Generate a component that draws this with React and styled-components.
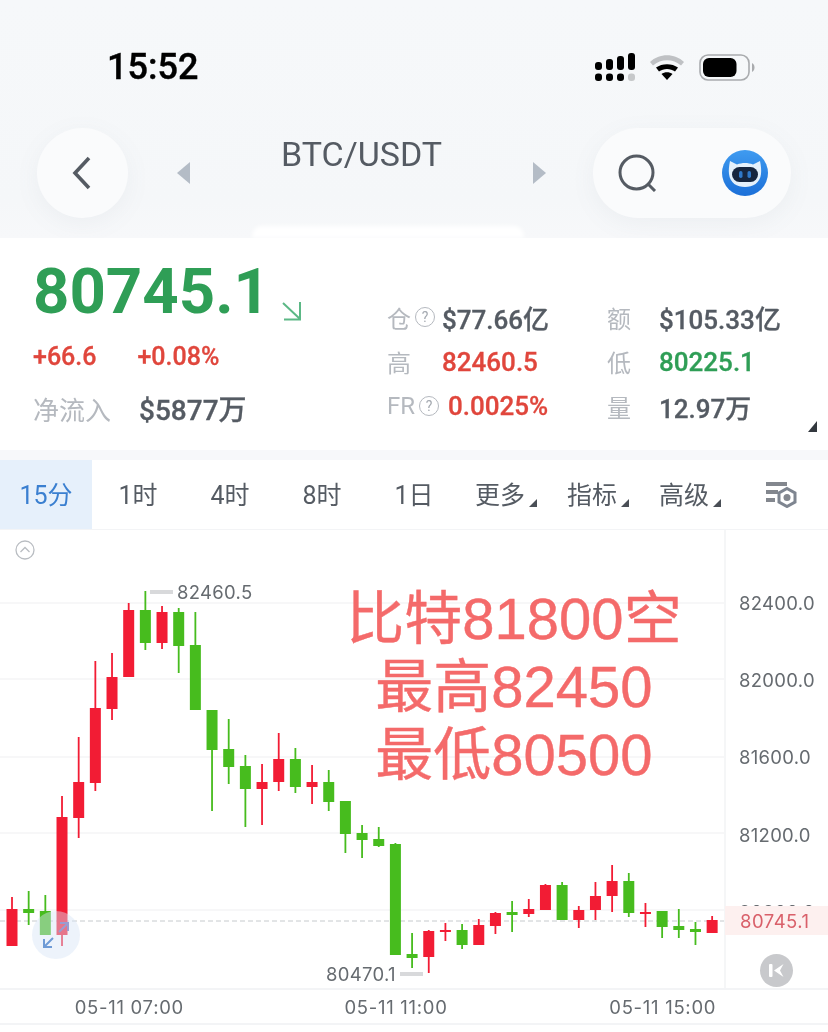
import React from 'react';
import styled, { createGlobalStyle } from 'styled-components';

const GlobalStyle = createGlobalStyle`
  html, body {
    margin: 0;
    padding: 0;
    background: #fff;
  }
  body {
    font-family: Roboto, "Noto Sans CJK SC", sans-serif;
  }
`;

const RED = '#f21c34';
const GREEN = '#47bc1e';

// x of the first candle is 12, then one every 16.67px
// [top wick, body top, body bottom, bottom wick, up?]
const CANDLES = [
  [897, 909, 946, 946, 1],
  [891, 909, 913, 925, 0],
  [895, 911, 935, 935, 0],
  [796, 817, 935, 946, 1],
  [737, 782, 818, 838, 1],
  [661, 708, 783, 791, 1],
  [653, 677, 709, 720, 1],
  [603, 610, 677, 677, 1],
  [591, 610, 643, 650, 0],
  [606, 612, 643, 649, 1],
  [608, 612, 646, 673, 0],
  [612, 645, 710, 710, 0],
  [710, 710, 750, 811, 0],
  [719, 749, 767, 784, 0],
  [755, 766, 789, 827, 0],
  [764, 782, 789, 825, 1],
  [733, 759, 782, 791, 1],
  [748, 759, 787, 793, 0],
  [765, 782, 787, 804, 1],
  [770, 782, 802, 811, 0],
  [801, 801, 834, 853, 0],
  [825, 833, 840, 858, 0],
  [827, 839, 846, 847, 0],
  [843, 844, 955, 955, 0],
  [933, 954, 958, 968, 0],
  [930, 931, 957, 973, 1],
  [923, 930, 932, 941, 1],
  [924, 930, 945, 949, 0],
  [919, 925, 945, 945, 1],
  [912, 913, 926, 934, 1],
  [901, 912, 915, 932, 0],
  [899, 909, 914, 917, 1],
  [884, 885, 910, 910, 1],
  [882, 885, 920, 920, 0],
  [906, 910, 920, 928, 1],
  [882, 896, 910, 920, 1],
  [865, 881, 896, 912, 1],
  [873, 881, 913, 917, 0],
  [903, 912, 914, 927, 1],
  [911, 911, 927, 938, 0],
  [909, 926, 930, 938, 0],
  [922, 929, 932, 945, 0],
  [916, 920, 933, 933, 1],
];

const GRID_LINES = [603, 679, 757, 833, 910];
const CHART_TOP = 530;

const Page = styled.div`
  width: 828px;
  height: 1032px;
  overflow: hidden;
  display: flex;
  flex-direction: column;
  background: #fff;
  filter: blur(0.5px);
`;

const Header = styled.header`
  height: 238px;
  box-sizing: border-box;
  padding-top: 46px;
  position: relative;
  background: linear-gradient(#f6f8fa, #f5f7f9 85%, #f7f8fa);

  &::after {
    content: '';
    position: absolute;
    left: 252px;
    bottom: 0;
    width: 272px;
    height: 12px;
    border-radius: 10px 10px 0 0;
    background: #fff;
    filter: blur(2px);
  }
`;

const StatusBar = styled.div`
  height: 42px;
  padding: 0 73px 0 107px;
  display: flex;
  align-items: center;
  justify-content: space-between;
`;

const Clock = styled.span`
  font-size: 36px;
  font-weight: 500;
  line-height: 42px;
  color: #000;
  -webkit-text-stroke: 0.4px #000;
`;

const StatusIcons = styled.div`
  display: flex;
  align-items: center;
  gap: 14px;
`;

const NavBar = styled.nav`
  margin-top: 40px;
  padding: 0 37px;
  display: flex;
  align-items: center;
  justify-content: space-between;
`;

const RoundButton = styled.button`
  width: 91px;
  height: 90px;
  padding: 0 3px 0 0;
  border: 0;
  border-radius: 50%;
  background: #fafbfc;
  box-shadow: 0 6px 24px rgba(120, 130, 145, 0.07);
  display: flex;
  align-items: center;
  justify-content: center;
`;

const PairSwitch = styled.div`
  width: 371px;
  height: 90px;
  box-sizing: border-box;
  padding-left: 2px;
  display: flex;
  justify-content: space-between;
  align-items: center;
`;

const PairName = styled.span`
  margin-top: -38px;
  font-size: 34px;
  line-height: 36px;
  color: #555b63;
`;

const ActionPill = styled.div`
  width: 198px;
  height: 90px;
  box-sizing: border-box;
  padding: 0 23px 0 25px;
  border-radius: 45px;
  background: #fafbfc;
  box-shadow: 0 6px 24px rgba(120, 130, 145, 0.07);
  display: flex;
  align-items: center;
  justify-content: space-between;
`;

const QuotePanel = styled.section`
  height: 212px;
  position: relative;
  display: flex;
  background: #fff;
`;

const MainQuote = styled.div`
  width: 387px;
  box-sizing: border-box;
  padding: 17px 0 0 33px;
`;

const PriceRow = styled.div`
  display: flex;
  align-items: flex-end;
  gap: 12px;
`;

const BigPrice = styled.span`
  font-size: 63.5px;
  font-weight: 700;
  line-height: 74px;
  color: #2f9e56;
`;

const PriceTrend = styled.svg`
  margin-bottom: 8px;
`;

const ChangeRow = styled.div`
  margin-top: 13px;
  display: flex;
  gap: 41px;
  font-size: 25px;
  font-weight: 500;
  line-height: 30px;
  color: #e0463c;
  -webkit-text-stroke: 0.3px #e0463c;
`;

const NetRow = styled.div`
  margin-top: 21px;
  display: flex;
  align-items: center;
  gap: 28px;
  line-height: 36px;
`;

const NetLabel = styled.span`
  font-size: 26px;
  color: #b5b9bf;
`;

const NetValue = styled.span`
  font-size: 28px;
  font-weight: 500;
  color: #555b63;
  -webkit-text-stroke: 0.3px #555b63;
`;

const StatsGrid = styled.div`
  padding-top: 57px;
  display: grid;
  grid-template-columns: 220px 1fr;
  grid-auto-rows: 44.5px;
`;

const Stat = styled.div`
  display: flex;
  align-items: center;
`;

const StatLabel = styled.span`
  width: ${(p) => p.$width}px;
  flex: none;
  display: flex;
  align-items: center;
  gap: 4px;
  font-size: 24px;
  color: #b5b9bf;
`;

const StatValue = styled.span`
  font-size: 26px;
  font-weight: 500;
  color: ${(p) => p.$color || '#555b63'};
  -webkit-text-stroke: 0.3px ${(p) => p.$color || '#555b63'};
`;

const HelpMark = styled.span`
  width: 18px;
  height: 18px;
  border: 1.5px solid #b5b9bf;
  border-radius: 50%;
  display: flex;
  align-items: center;
  justify-content: center;
  font-size: 14px;
  line-height: 1;
  color: #a4a9b0;
`;

const CornerMark = styled.span`
  position: absolute;
  right: 11px;
  bottom: 18px;
  width: 0;
  height: 0;
  border-style: solid;
  border-width: 0 0 11px 9px;
  border-color: transparent transparent #33383e transparent;
`;

const Divider = styled.div`
  height: 10px;
  background: #f7f8fa;
`;

const Tabs = styled.div`
  height: 70px;
  display: grid;
  grid-template-columns: repeat(9, 92px);
  border-bottom: 1px solid #f3f4f6;
  box-sizing: border-box;
`;

const Tab = styled.div`
  padding-bottom: 3px;
  display: flex;
  align-items: center;
  justify-content: center;
  gap: 4px;
  font-size: 25px;
  color: ${(p) => (p.$active ? '#3a7fd0' : '#555b63')};
  background: ${(p) => (p.$active ? '#e6f0fb' : 'transparent')};
`;

const TabCaret = styled.span`
  margin-top: 20px;
  width: 0;
  height: 0;
  border-style: solid;
  border-width: 0 0 8px 8px;
  border-color: transparent transparent #4a4f56 transparent;
`;

const SettingsGlyph = styled.svg`
  margin-top: 4px;
`;

const ChartArea = styled.section`
  flex: 1;
  display: flex;
  flex-direction: column;
`;

const ChartBody = styled.div`
  height: 460px;
  position: relative;
  display: flex;
  border-bottom: 2px solid #f3f4f6;
  box-sizing: border-box;
`;

const Plot = styled.div`
  width: 724px;
  flex: none;
  position: relative;
  overflow: hidden;
`;

const PriceAxis = styled.div`
  flex: 1;
  border-left: 2px solid #f5f6f7;
  box-sizing: border-box;
  padding-top: 60px;
  overflow: hidden;
`;

const AxisLabel = styled.div`
  height: 77.2px;
  line-height: 26px;
  padding-left: 13px;
  font-family: Inter, sans-serif;
  font-size: 18.5px;
  letter-spacing: 0.3px;
  color: #666b70;
`;

const LastPrice = styled.div`
  position: absolute;
  right: 0;
  top: 376px;
  width: 103px;
  height: 29px;
  background: #fdf0ef;
  padding-left: 15px;
  box-sizing: border-box;
  font-family: Inter, sans-serif;
  font-size: 18.5px;
  letter-spacing: 0.5px;
  line-height: 30px;
  color: #d9606a;
`;

const Extreme = styled.div`
  position: absolute;
  left: ${(p) => p.$left}px;
  top: ${(p) => p.$top}px;
  display: flex;
  align-items: center;
  gap: 4px;
  font-family: Inter, sans-serif;
  font-size: 18.5px;
  letter-spacing: 0.3px;
  line-height: 20px;
  color: #666b70;
`;

const ExtremeTick = styled.span`
  width: 23px;
  height: 4px;
  background: #d8d9db;
`;

const Annotation = styled.div`
  position: absolute;
  left: 300px;
  top: 55px;
  width: 428px;
  text-align: center;
  font-family: "Liberation Sans", "Noto Sans CJK SC", sans-serif;
  font-size: 58px;
  line-height: 68px;
  color: #f46a6a;
  -webkit-text-stroke: 0.4px #f46a6a;
`;

const CollapseIcon = styled.svg`
  position: absolute;
  left: 15px;
  top: 10px;
`;

const ExpandButton = styled.div`
  position: absolute;
  left: 32px;
  top: 381px;
  width: 48px;
  height: 48px;
  border-radius: 50%;
  background: rgba(214, 228, 246, 0.45);
  display: flex;
  align-items: center;
  justify-content: center;
`;

const RewindButton = styled.div`
  position: absolute;
  right: 35px;
  bottom: 1px;
  width: 33px;
  height: 33px;
  border-radius: 50%;
  background: #c8c9cc;
  display: flex;
  align-items: center;
  justify-content: center;
`;

const TimeAxis = styled.div`
  height: 33px;
  display: flex;
  margin-left: -4px;
  border-bottom: 2px solid #f3f4f6;
`;

const TimeLabel = styled.span`
  width: 266.7px;
  text-align: center;
  font-family: Inter, sans-serif;
  font-size: 18.5px;
  letter-spacing: 0.7px;
  line-height: 35px;
  color: #666b70;
`;

function SignalIcon() {
  const cols = [
    { x: 0, top: 9 },
    { x: 11, top: 6 },
    { x: 22, top: 3 },
    { x: 33, top: 0 },
  ];
  return (
    <svg width="40" height="28" viewBox="0 0 40 28">
      {cols.map((c, i) => (
        <g key={c.x}>
          <rect x={c.x} y={c.top} width="7" height={17 - c.top} rx="3" fill="#000" />
          <rect x={c.x} y="20.500" width="7" height="7.500" rx="3" fill={i === 3 ? '#c6c8ca' : '#000'} />
        </g>
      ))}
    </svg>
  );
}

function WifiIcon() {
  return (
    <svg width="36" height="26" viewBox="0 0 36 26">
      <path d="M1 8C10 -1 26 -1 35 8L32 11.500C24 4.500 12 4.500 4 11.500Z" fill="#bfc1c4" />
      <path d="M7 13.500C13 9 23 9 29 13.500L26 17.500C21.500 14 14.500 14 10 17.500Z" fill="#000" />
      <path d="M12.500 20C15.500 17.800 20.500 17.800 23.500 20L18 26Z" fill="#000" />
    </svg>
  );
}

function BatteryIcon() {
  return (
    <svg width="56" height="27" viewBox="0 0 56 27">
      <rect x="1" y="1" width="49" height="25" rx="8" fill="none" stroke="#a9abae" strokeWidth="1.6" />
      <rect x="4" y="4" width="33.500" height="19" rx="6" fill="#000" />
      <path d="M53 9C55 10 55.500 12 55.500 13.500C55.500 15 55 17 53 18Z" fill="#a9abae" />
    </svg>
  );
}

function BackIcon() {
  return (
    <svg width="19" height="34" viewBox="0 0 19 34">
      <path d="M17 2L3 17L17 32" fill="none" stroke="#555b63" strokeWidth="3.6" />
    </svg>
  );
}

function PairArrow({ right }) {
  return (
    <svg width="13" height="22" viewBox="0 0 13 22">
      <path d={right ? 'M0 0L13 11L0 22Z' : 'M13 0L0 11L13 22Z'} fill="#b4bcc6" />
    </svg>
  );
}

function SearchIcon() {
  return (
    <svg width="40" height="38" viewBox="0 0 40 38">
      <circle cx="18.500" cy="18.500" r="16.500" fill="none" stroke="#555b63" strokeWidth="3" />
      <path d="M30 30L37 37" stroke="#555b63" strokeWidth="3" />
    </svg>
  );
}

function BotIcon() {
  return (
    <svg width="46" height="46" viewBox="0 0 46 46">
      <defs>
        <linearGradient id="botBg" x1="0" y1="0" x2="0" y2="1">
          <stop offset="0" stopColor="#3f9bf0" />
          <stop offset="1" stopColor="#1b6fd8" />
        </linearGradient>
      </defs>
      <circle cx="23" cy="23" r="23" fill="url(#botBg)" />
      <path d="M8 11L15 14.500C20 12.500 26 12.500 31 14.500L38 11C39 16 39.500 20 39 24C38 33 31 37 23 37C15 37 8 33 7 24C6.500 20 7 16 8 11Z" fill="#e4f0fb" />
      <rect x="10" y="17" width="26" height="15" rx="7.500" fill="#16263f" />
      <rect x="17" y="21" width="3.500" height="7" rx="1.700" fill="#2f78c8" />
      <rect x="25.500" y="21" width="3.500" height="7" rx="1.700" fill="#2f78c8" />
    </svg>
  );
}

function DownArrow() {
  return (
    <PriceTrend width="20" height="20" viewBox="0 0 20 20">
      <path d="M1 2L18 18M18 1V18.500H2" fill="none" stroke="#5cb886" strokeWidth="2" />
    </PriceTrend>
  );
}

function ChartIconSettings() {
  return (
    <SettingsGlyph width="32" height="26" viewBox="0 0 32 26">
      <path d="M0 2H21M0 10H12M0 18H9" stroke="#83878e" strokeWidth="4" fill="none" />
      <path d="M21 6.500L29 11V20L21 24.500L13 20V11Z" fill="none" stroke="#7e8590" strokeWidth="3" />
      <circle cx="21" cy="15.500" r="3.500" fill="#83878e" />
    </SettingsGlyph>
  );
}

function Candles() {
  return (
    <svg width="724" height="458" viewBox={`0 ${CHART_TOP} 724 458`}>
      {GRID_LINES.map((y) => (
        <line key={y} x1="0" x2="724" y1={y} y2={y} stroke="#f4f5f6" strokeWidth="1.500" />
      ))}
      <line x1="0" x2="724" y1="921" y2="921" stroke="#c6cacd" strokeWidth="1" strokeDasharray="5 3" />
      {CANDLES.map(([top, open, close, low, up], i) => {
        const x = 12 + i * 16.67;
        const color = up ? RED : GREEN;
        return (
          <g key={x} fill={color}>
            <rect x={x - 0.9} y={top} width="1.8" height={low - top} />
            <rect x={x - 5.5} y={open} width="11" height={Math.max(close - open, 2)} />
          </g>
        );
      })}
    </svg>
  );
}

const STATS = [
  { label: '仓', help: true, value: '$77.66亿', sub: '额', subValue: '$105.33亿' },
  { label: '高', value: '82460.5', color: '#e0463c', sub: '低', subValue: '80225.1', subColor: '#2f9e56' },
  { label: 'FR', help: true, value: '0.0025%', color: '#e0463c', gap: 61, sub: '量', subValue: '12.97万' },
];

const TABS = [
  { name: '15分', active: true },
  { name: '1时' },
  { name: '4时' },
  { name: '8时' },
  { name: '1日' },
  { name: '更多', caret: true },
  { name: '指标', caret: true },
  { name: '高级', caret: true },
];

export default function App() {
  return (
    <>
      <GlobalStyle />
      <Page>
        <Header>
          <StatusBar>
            <Clock>15:52</Clock>
            <StatusIcons>
              <SignalIcon />
              <WifiIcon />
              <BatteryIcon />
            </StatusIcons>
          </StatusBar>
          <NavBar>
            <RoundButton>
              <BackIcon />
            </RoundButton>
            <PairSwitch>
              <PairArrow />
              <PairName>BTC/USDT</PairName>
              <PairArrow right />
            </PairSwitch>
            <ActionPill>
              <SearchIcon />
              <BotIcon />
            </ActionPill>
          </NavBar>
        </Header>

        <QuotePanel>
          <MainQuote>
            <PriceRow>
              <BigPrice>80745.1</BigPrice>
              <DownArrow />
            </PriceRow>
            <ChangeRow>
              <span>+66.6</span>
              <span>+0.08%</span>
            </ChangeRow>
            <NetRow>
              <NetLabel>净流入</NetLabel>
              <NetValue>$5877万</NetValue>
            </NetRow>
          </MainQuote>
          <StatsGrid>
            {STATS.map((s) => (
              <React.Fragment key={s.label}>
                <Stat>
                  <StatLabel $width={s.gap || 55}>
                    {s.label}
                    {s.help && <HelpMark>?</HelpMark>}
                  </StatLabel>
                  <StatValue $color={s.color}>{s.value}</StatValue>
                </Stat>
                <Stat>
                  <StatLabel $width={52}>{s.sub}</StatLabel>
                  <StatValue $color={s.subColor}>{s.subValue}</StatValue>
                </Stat>
              </React.Fragment>
            ))}
          </StatsGrid>
          <CornerMark />
        </QuotePanel>

        <Divider />

        <Tabs>
          {TABS.map((t) => (
            <Tab key={t.name} $active={t.active}>
              {t.name}
              {t.caret && <TabCaret />}
            </Tab>
          ))}
          <Tab>
            <ChartIconSettings />
          </Tab>
        </Tabs>

        <ChartArea>
          <ChartBody>
            <Plot>
              <Candles />
              <CollapseIcon width="20" height="20" viewBox="0 0 20 20">
                <circle cx="10" cy="10" r="9" fill="none" stroke="#b9bdc2" strokeWidth="1.300" />
                <path d="M5.500 12L10 7.500L14.500 12" fill="none" stroke="#b9bdc2" strokeWidth="1.300" />
              </CollapseIcon>
              <Extreme $left={150} $top={52}>
                <ExtremeTick />
                82460.5
              </Extreme>
              <Extreme $left={326} $top={434}>
                80470.1
                <ExtremeTick />
              </Extreme>
              <Annotation>
                比特81800空
                <br />
                最高82450
                <br />
                最低80500
              </Annotation>
              <ExpandButton>
                <svg width="28" height="28" viewBox="0 0 28 28">
                  <path d="M2 26L11 17M2 18V26H10" fill="none" stroke="#6f9bd6" strokeWidth="2" />
                  <path d="M26 2L17 11M18 2H26V10" fill="none" stroke="#9a9cd0" strokeWidth="2" />
                </svg>
              </ExpandButton>
            </Plot>
            <PriceAxis>
              <AxisLabel>82400.0</AxisLabel>
              <AxisLabel>82000.0</AxisLabel>
              <AxisLabel>81600.0</AxisLabel>
              <AxisLabel>81200.0</AxisLabel>
              <AxisLabel>80800.0</AxisLabel>
            </PriceAxis>
            <LastPrice>80745.1</LastPrice>
            <RewindButton>
              <svg width="15" height="15" viewBox="0 0 15 15">
                <rect x="0" y="1" width="3.500" height="13" rx="1" fill="#fff" />
                <path d="M14.500 1L5 7.500L14.500 14L11 7.500Z" fill="#fff" />
              </svg>
            </RewindButton>
          </ChartBody>
          <TimeAxis>
            <TimeLabel>05-11 07:00</TimeLabel>
            <TimeLabel>05-11 11:00</TimeLabel>
            <TimeLabel>05-11 15:00</TimeLabel>
          </TimeAxis>
        </ChartArea>
      </Page>
    </>
  );
}
